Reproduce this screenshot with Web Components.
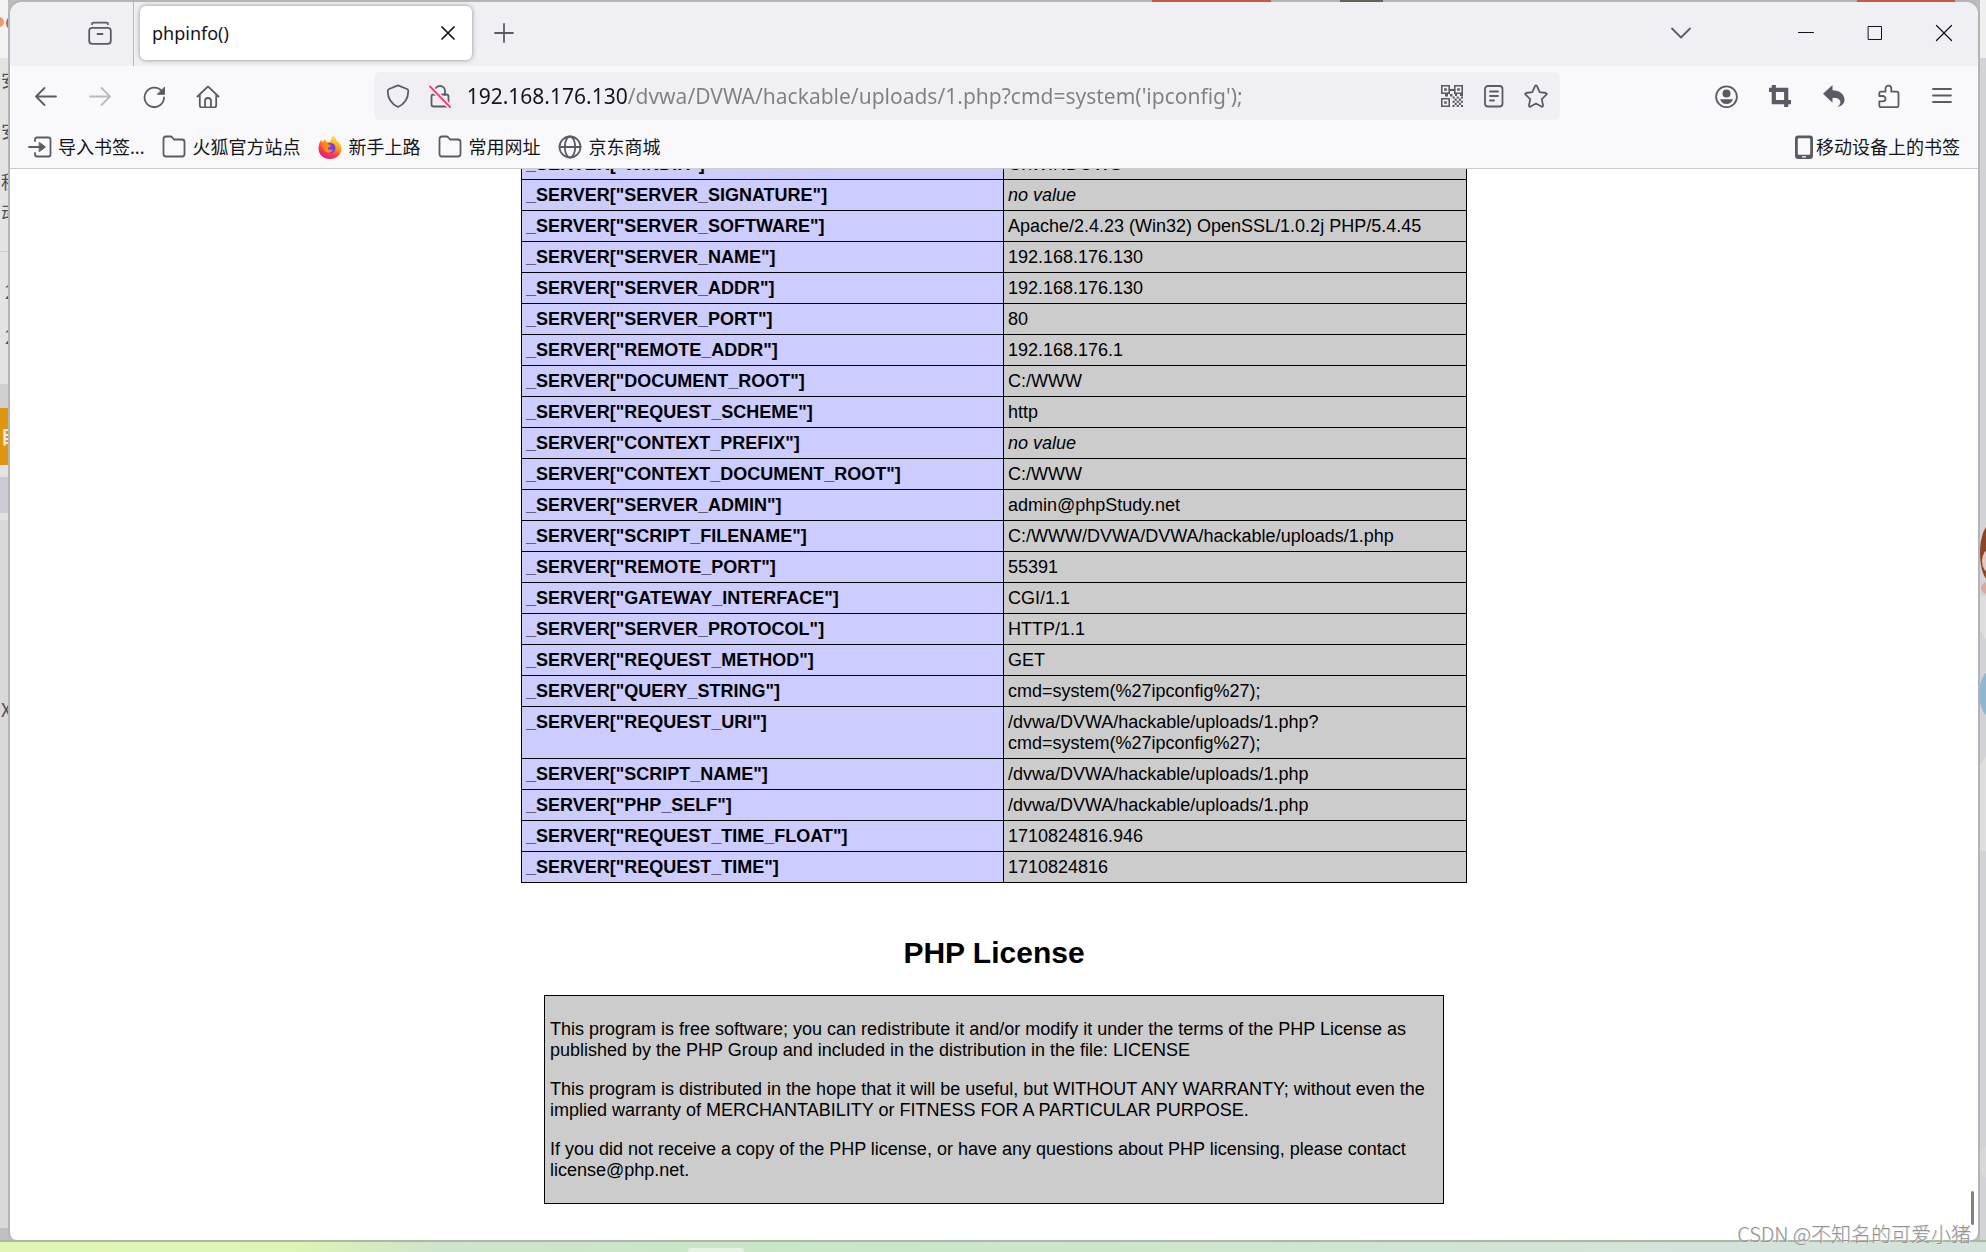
<!DOCTYPE html>
<html lang="zh-CN">
<head>
<meta charset="utf-8">
<title>phpinfo()</title>
<style>
html, body { margin: 0; height: 100%; overflow: hidden; }
body { font-family: "Noto Sans", "Noto Sans CJK SC", sans-serif; color: #15141a; }
</style>
</head>
<body>
<desk-top>
  <browser-window>
    <tab-strip slot="chrome"><browser-tab>phpinfo()</browser-tab></tab-strip>
    <nav-bar slot="chrome"></nav-bar>
    <bookmark-bar slot="chrome">
      <book-mark icon="import">导入书签...</book-mark>
      <book-mark icon="folder">火狐官方站点</book-mark>
      <book-mark icon="firefox">新手上路</book-mark>
      <book-mark icon="folder">常用网址</book-mark>
      <book-mark icon="globe">京东商城</book-mark>
      <book-mark slot="end" icon="phone" tight>移动设备上的书签</book-mark>
    </bookmark-bar>
    <server-table></server-table>
    <license-section>
      <p>This program is free software; you can redistribute it and/or modify it under the terms of the PHP License as published by the PHP Group and included in the distribution in the file: LICENSE</p>
      <p>This program is distributed in the hope that it will be useful, but WITHOUT ANY WARRANTY; without even the implied warranty of MERCHANTABILITY or FITNESS FOR A PARTICULAR PURPOSE.</p>
      <p>If you did not receive a copy of the PHP license, or have any questions about PHP licensing, please contact license@php.net.</p>
    </license-section>
  </browser-window>
  <water-mark slot="overlay">CSDN @不知名的可爱小猪</water-mark>
</desk-top>
<script>
const define = (name, html, setup) => {
  const template = document.createElement('template');
  template.innerHTML = html;
  customElements.define(name, class extends HTMLElement {
    constructor() {
      super();
      this.attachShadow({ mode: 'open' }).append(template.content.cloneNode(true));
    }
    connectedCallback() { if (setup) setup(this, this.shadowRoot); }
  });
};

const qr = () => {
  let d = '';
  for (let y = 0; y < 5; y++) for (let x = 0; x < 5; x++)
    if ((x + y) % 2 === 0) d += `M${12.5 + x * 2.1} ${12.5 + y * 2.1}h2.1v2.1h-2.1z`;
  return `<g stroke-width="1.6"><path d="M1.8 1.8h7.4v7.4H1.8zM14.8 1.8h7.4v7.4h-7.4zM1.8 14.8h7.4v7.4H1.8z"/></g>
    <path fill="currentColor" stroke="none" d="M4.2 4.2h2.6v2.6H4.2zM17.2 4.2h2.6v2.6h-2.6zM4.2 17.2h2.6v2.6H4.2zM10 5h4v2h-4zM5 10h3v2.500H5zM10 10h2.500v2.500H10zM20 10h3v2h-3zM15 10h2v2h-2z${d}"/>`;
};

const ICONS = {
  library: '<path d="M4 3.200Q4 1.700 5.500 1.700h13Q20 1.700 20 3.200"/><rect x="1.200" y="6.800" width="21.600" height="16" rx="3"/><path d="M9.500 13h5"/>',
  close: '<path d="M6 6l12 12M18 6L6 18" stroke="#15141a" stroke-width="1.700"/>',
  plus: '<path d="M12 3v18M3 12h18"/>',
  chevron: '<path d="M3 7.500l9 9 9-9"/>',
  min: '<path d="M4.500 11.500h15" stroke="#15141a" stroke-width="1"/>',
  max: '<rect x="5.500" y="5.500" width="13" height="13" stroke="#15141a" stroke-width="1"/>',
  quit: '<path d="M4.500 4.500l15 15M19.500 4.500l-15 15" stroke="#15141a" stroke-width="1.300"/>',
  back: '<path d="M22 12.500H2.500M10.500 4L2 12.500l8.500 8.500"/>',
  reload: '<path d="M20 7.500A9.700 9.700 0 1 0 22 13.500"/><path fill="currentColor" stroke-width="1" d="M22.500 3.500v6.800h-6.800z"/>',
  home: '<path d="M1.500 12.500L11 3.300q1-1 2 0l9.500 9.200M3.800 11v10.500q0 2 2 2h12.400q2 0 2-2V11M9 23.200V17q0-3 3-3t3 3v6.200"/>',
  shield: '<path d="M12 1.300L21 5q1.300.6 1.300 2C22.200 14 18.500 20 12 23 5.500 20 1.800 14 1.700 7Q1.700 5.600 3 5z"/>',
  lock: '<path d="M7 11V7a5 5 0 0 1 10 0v4M5.500 10.500q-2 0-2 2v8q0 2 2 2h13q2 0 2-2v-8q0-2-2-2h-4.500M5.500 10.500h5"/><path stroke="#f0f0f4" stroke-width="5" d="M2 2.500l20 20.500"/><path stroke="#ff3b6b" d="M2 2.500l20 20.500"/>',
  qr: qr(),
  reader: '<rect x="3" y="2" width="17.500" height="20.500" rx="3"/><path d="M8 7.500h8M8 12h8M8 16.500h4"/>',
  star: '<path d="M12 1.500q.7 0 1 .7l2.700 5.900 6.200.9q1.500.4.500 1.700l-4.600 4.500 1.200 6.300q0 1.700-1.600 1.100L12 19.400l-5.400 3.200q-1.600.6-1.600-1.100l1.200-6.300-4.600-4.500q-1-1.300.5-1.700l6.200-.9L11 2.200q.3-.7 1-.7z"/>',
  account: '<circle cx="12.500" cy="12.800" r="10.400"/><g fill="currentColor" stroke="none"><circle cx="12.500" cy="9.600" r="4"/><path d="M6.100 15.300h12.800q-1.400 4.700-6.400 4.700t-6.400-4.700z"/></g>',
  crop: '<path stroke-width="4.200" d="M1 5.800h17.200V23M5.800 1v17.200H23"/>',
  undo: '<path fill="currentColor" stroke="none" d="M1 9.800L10.500 1v5.300c7 0 12 4 12 9.500 0 4-3 6.500-7 7.200 2.800-2.300 3.500-4.300 2.500-6.500-1-2-3.500-2.700-7.500-2.700v5z"/>',
  puzzle: '<path d="M5 23.200q-1.700 0-1.700-1.700V17.400h3.500a2.700 2.700 0 0 0 0-5.400H3.300V9.400q0-1.700 1.700-1.700h4.500V4.600a2.900 2.900 0 0 1 5.800 0v3.100h5.500q1.700 0 1.700 1.700v12q0 1.800-1.700 1.800z"/>',
  menu: '<path d="M3 5h18M3 11.500h18M3 18h18"/>',
  import: '<path d="M7 6V4.500Q7 2.500 9 2.500h11.500q2 0 2 2v15q0 2-2 2H9q-2 0-2-2V18M1 12h12"/><path fill="currentColor" stroke-width="1" d="M11.500 7.500l6 4.500-6 4.500z"/>',
  folder: '<path d="M1.500 19V4q0-2.500 2.500-2.500h4.500q1 0 1.700.8L12 4.500h8q2.500 0 2.500 2.500v12q0 2.500-2.500 2.500H4Q1.500 21.500 1.500 19z"/>',
  globe: '<circle cx="12" cy="12" r="10.500"/><ellipse cx="12" cy="12" rx="5.200" ry="10.500"/><path d="M1.500 12h21"/>',
  phone: '<path fill="currentColor" stroke="none" fill-rule="evenodd" d="M6 .5h12q3 0 3 3v17.500q0 3-3 3H6q-3 0-3-3V3.500q0-3 3-3zM7 3.300q-1.200 0-1.200 1.200v14q0 1.200 1.200 1.200h10q1.200 0 1.200-1.200v-14q0-1.200-1.200-1.200zM10 21.200v1.200h4v-1.200z"/>',
  firefox: `<defs><linearGradient id="f" x1=".8" y1="0" x2=".3" y2="1"><stop offset="0" stop-color="#fff44f"/><stop offset=".4" stop-color="#ffa21f"/><stop offset=".7" stop-color="#ff3f3f"/><stop offset="1" stop-color="#e31587"/></linearGradient></defs>
    <g stroke="none"><path fill="url(#f)" d="M15.500.5c2 2 2.500 3.500 3.200 5.200 3 2 4.800 4.600 4.800 7.800 0 6-5 10.500-11.500 10.500S.5 19.500.5 13.500C.5 10 1.500 6.500 3.500 4.500c0 1.200.2 1.800.8 2.500C5.500 6 6 5 7 4c.4 1.500 1 2.500 2.500 3.200C11.500 7 13 6.500 13 5c0-2 1-3.300 2.500-4.500z"/>
    <circle cx="12.300" cy="13" r="5.200" fill="#7542e5"/><path fill="#ff8a16" d="M4.500 10.500c2-2 5-2 6.500-1 1.500.2 2 1 1.500 1.800-1 1.200-2.500.7-2.700 2 .5 1.800 3 2.200 4.700.9 0 3-3 4-5 3.200-3-1-5-3.500-5-6.900z"/></g>`
};

/* A 24-unit line icon, chosen by name */
define('ui-icon', `<style>
  :host { display: block; width: 24px; height: 24px; flex: none; }
  svg { display: block; width: 100%; height: 100%; fill: none; stroke: currentColor; stroke-width: 1.800; stroke-linecap: round; stroke-linejoin: round; }
  :host([name=crop]) svg, :host([name=qr]) svg { stroke-linecap: butt; stroke-linejoin: miter; }
  :host([flip]) svg { transform: scaleX(-1); }
</style><svg viewBox="0 0 24 24" aria-hidden="true"></svg>`,
(el, root) => { root.querySelector('svg').innerHTML = ICONS[el.getAttribute('name')] || ''; });

const setIcon = (icon, name) => {
  icon.setAttribute('name', name);
  icon.shadowRoot.querySelector('svg').innerHTML = ICONS[name];
};

define('icon-button', `<style>
  :host { display: flex; flex: none; width: 48px; height: 48px; }
  button { all: unset; flex: 1; display: flex; align-items: center; justify-content: center; color: #5b5b66; }
  button:disabled { opacity: .4; }
</style><button type="button"><ui-icon></ui-icon></button>`,
(el, root) => {
  const icon = root.querySelector('ui-icon');
  const button = root.querySelector('button');
  const name = el.getAttribute('icon');
  setIcon(icon, name);
  if (el.hasAttribute('flip')) icon.setAttribute('flip', '');
  button.disabled = el.hasAttribute('disabled');
  button.setAttribute('aria-label', el.getAttribute('label') || name);
});

define('browser-tab', `<style>
  :host { display: flex; align-items: center; width: 332px; height: 54px; box-sizing: border-box; padding: 0 0 0 12px;
    background: #fff; border-radius: 6px; box-shadow: 0 0 5px rgba(0,0,0,.4); font-size: 18px; }
  span { flex: 1; }
</style><span><slot></slot></span><icon-button icon="close" label="关闭标签页"></icon-button>`);

define('tab-strip', `<style>
  :host { display: flex; height: 64px; box-sizing: border-box; padding-bottom: 2px; align-items: center; background: #f0f0f4; }
  .lib { height: 64px; display: flex; align-items: center; justify-content: flex-end; width: 123px; border-right: 1px solid #b9b9bf; margin: 0 6px -2px 0; padding-bottom: 2px; box-sizing: border-box; width: 124px; }
  .lib icon-button { width: 66px; }
  .add { margin-left: 8px; }
  .space { flex: 1; }
  .list { margin-right: 66px; }
  .sys { width: 69px; }
</style>
<div class="lib"><icon-button icon="library"></icon-button></div>
<slot></slot>
<icon-button class="add" icon="plus" label="新标签页"></icon-button>
<div class="space"></div>
<icon-button class="list" icon="chevron"></icon-button>
<icon-button class="sys" icon="min"></icon-button>
<icon-button class="sys" icon="max"></icon-button>
<icon-button class="sys" icon="quit"></icon-button>`);

define('address-box', `<style>
  :host { display: flex; align-items: center; height: 48px; background: #f0f0f4; border-radius: 6px; padding: 0 3px; box-sizing: border-box; min-width: 0; }
  icon-button { width: 42px; }
  input { all: unset; flex: 1; min-width: 0; height: 48px; margin-left: 6px; font-size: 21px; color: #15141a;
    background: linear-gradient(90deg, #15141a 161px, #808084 161px);
    -webkit-background-clip: text; background-clip: text; -webkit-text-fill-color: transparent; }
</style>
<icon-button icon="shield"></icon-button><icon-button icon="lock"></icon-button>
<input type="text" aria-label="地址" value="192.168.176.130/dvwa/DVWA/hackable/uploads/1.php?cmd=system('ipconfig');">
<icon-button icon="qr"></icon-button><icon-button icon="reader"></icon-button><icon-button icon="star"></icon-button>`);

define('nav-bar', `<style>
  :host { display: flex; align-items: center; height: 60px; padding: 0 12px; background: #f9f9fb; }
  nav { display: flex; gap: 6px; }
  .spring { flex: 3; }
  address-box { flex: 25; }
</style>
<nav><icon-button icon="back"></icon-button><icon-button icon="back" flip disabled label="前进"></icon-button><icon-button icon="reload"></icon-button><icon-button icon="home"></icon-button></nav>
<div class="spring"></div><address-box></address-box><div class="spring"></div>
<nav><icon-button icon="account"></icon-button><icon-button icon="crop"></icon-button><icon-button icon="undo"></icon-button><icon-button icon="puzzle"></icon-button><icon-button icon="menu"></icon-button></nav>`);

define('bookmark-bar', `<style>
  :host { display: flex; justify-content: space-between; align-items: center; height: 42px; padding: 0 18px; background: #f9f9fb; border-bottom: 1px solid #ccccce; }
  div { display: flex; gap: 18px; }
</style><div><slot></slot></div><div><slot name="end"></slot></div>`);

define('book-mark', `<style>
  :host { display: block; font-size: 18px; line-height: 24px; }
  a { display: flex; align-items: center; gap: 6px; color: inherit; text-decoration: none; white-space: nowrap; }
  :host([tight]) a { gap: 0; }
  ui-icon { color: #5b5b66; }
</style><a href="#"><ui-icon></ui-icon><span><slot></slot></span></a>`,
(el, root) => setIcon(root.querySelector('ui-icon'), el.getAttribute('icon')));

const ROWS = [
  ['WINDIR', 'C:\\WINDOWS'], ['SERVER_SIGNATURE', null],
  ['SERVER_SOFTWARE', 'Apache/2.4.23 (Win32) OpenSSL/1.0.2j PHP/5.4.45'],
  ['SERVER_NAME', '192.168.176.130'], ['SERVER_ADDR', '192.168.176.130'], ['SERVER_PORT', '80'],
  ['REMOTE_ADDR', '192.168.176.1'], ['DOCUMENT_ROOT', 'C:/WWW'], ['REQUEST_SCHEME', 'http'],
  ['CONTEXT_PREFIX', null], ['CONTEXT_DOCUMENT_ROOT', 'C:/WWW'], ['SERVER_ADMIN', 'admin@phpStudy.net'],
  ['SCRIPT_FILENAME', 'C:/WWW/DVWA/DVWA/hackable/uploads/1.php'], ['REMOTE_PORT', '55391'],
  ['GATEWAY_INTERFACE', 'CGI/1.1'], ['SERVER_PROTOCOL', 'HTTP/1.1'], ['REQUEST_METHOD', 'GET'],
  ['QUERY_STRING', 'cmd=system(%27ipconfig%27);'],
  ['REQUEST_URI', '/dvwa/DVWA/hackable/uploads/1.php?<wbr>cmd=system(%27ipconfig%27);'],
  ['SCRIPT_NAME', '/dvwa/DVWA/hackable/uploads/1.php'], ['PHP_SELF', '/dvwa/DVWA/hackable/uploads/1.php'],
  ['REQUEST_TIME_FLOAT', '1710824816.946'], ['REQUEST_TIME', '1710824816']
];

define('server-table', `<style>
  :host { display: block; flex: none; width: 946px; max-width: 100%; font: 18px/21px "Liberation Sans", Arial, sans-serif; color: #000; }
  table { width: 100%; border-collapse: collapse; table-layout: fixed; }
  th, td { border: 1px solid #000; padding: 5px 4px 4px; text-align: left; vertical-align: top; }
  th { width: 51%; box-sizing: border-box; background: #ccccff; }
  td { background: #cccccc; }
</style><table><tbody></tbody></table>`,
(el, root) => {
  root.querySelector('tbody').innerHTML = ROWS.map(([k, v]) =>
    `<tr><th scope="row">_SERVER["${k}"]</th><td>${v === null ? '<i>no value</i>' : v}</td></tr>`).join('');
});

define('license-section', `<style>
  :host { display: block; flex: none; width: 900px; max-width: 100%; font: 18px/21px "Liberation Sans", Arial, sans-serif; color: #000; }
  h2 { margin: 0 0 24px; font-size: 30px; line-height: 36px; text-align: center; }
  div { display: flow-root; border: 1px solid #000; background: #ccc; padding: 5px 4px 4px 5px; }
  ::slotted(p) { margin: 18px 0; }
</style><h2>PHP License</h2><div><slot></slot></div>`);

define('browser-window', `<style>
  :host { display: flex; flex-direction: column; box-sizing: border-box; background: #fff; overflow: hidden; border-radius: 14px 14px 8px 8px;
    border: 2px solid #b4b4b6; border-bottom: 0; }
  .chrome { display: flex; flex-direction: column; flex: none; }
  .body { flex: 1; min-height: 0; display: flex; }
  main { flex: 1; min-width: 0; display: flex; flex-direction: column; align-items: center; justify-content: flex-end; gap: 52px; overflow: hidden; padding-bottom: 36px; }
  .scroll { position: absolute; right: 12px; bottom: 27px; width: 3px; height: 34px; border-radius: 2px; background: #808080; }
</style>
<div class="chrome"><slot name="chrome"></slot></div>
<div class="body"><main><slot></slot></main></div><div class="scroll"></div>`);

define('water-mark', `<style>
  :host { position: absolute; right: 15px; bottom: 6px; font: 300 20px/24px "Noto Sans CJK SC", sans-serif; color: #929292; text-shadow: 1px 1px 0 #e4e4e4; white-space: nowrap; }
</style><slot></slot>`);

/* The page that shows behind the window's two sides */
define('back-drop', `<style>
  :host { display: block; overflow: hidden; }
  svg { display: block; width: 100%; height: 100%; }
  text { font: 18px "Noto Sans CJK SC", sans-serif; fill: #505060; }
</style><svg></svg>`,
(el, root) => {
  root.querySelector('svg').innerHTML = el.getAttribute('side') === 'left'
    ? `<rect width="12" height="1240" fill="#e3e3e3"/><rect width="12" height="58" fill="#f3f3f3"/>
       <rect y="520" width="12" height="720" fill="#d9d9d9"/><rect y="1228" width="12" height="12" fill="#bfc0c4"/>
       <circle cx="-1" cy="22" r="5" fill="#ee9b67"/><circle cx="14" cy="23" r="8" fill="#e0563c"/>
       <rect y="251" width="12" height="1" fill="#c8c8c8"/><rect y="384" width="12" height="24" fill="#d0d0d2"/>
       <rect y="408" width="12" height="57" fill="#de960f"/><rect y="477" width="12" height="36" fill="#cbcbd4"/>
       <text x="1" y="87">安</text><text x="1" y="138">安</text><text x="1" y="189">程</text><text x="1" y="220">动</text>
       <text x="5" y="299">2</text><text x="5" y="344">2</text><text x="1" y="444" style="fill:#f4efe4;font-weight:bold">目</text><text x="1" y="717">X</text>`
    : `<rect width="10" height="1240" fill="#d2d3d6"/><rect width="10" height="58" fill="#efefef"/>
       <ellipse cx="10" cy="553" rx="10" ry="28" fill="#8b4524"/><ellipse cx="10" cy="561" rx="8" ry="12" fill="#e2c5be"/><ellipse cx="8" cy="588" rx="7" ry="6" fill="#dda99d"/>
       <path d="M0 596h10v50L0 630z" fill="#dedede"/><ellipse cx="14" cy="694" rx="15" ry="25" fill="#8fb8d0"/>
       <path d="M0 765l10-14v100H0z" fill="#dedede"/><circle cx="18" cy="1162" r="20" fill="#d8d8d8"/>`;
});

define('desk-top', `<style>
  :host { display: flex; flex-direction: column; height: 100vh; position: relative; overflow: hidden; background: #bdbdbd; }
  .row { flex: 1; min-height: 0; display: flex; }
  back-drop { width: 8px; }
  back-drop[side=right] { width: 6px; }
  ::slotted(browser-window) { flex: 1; min-width: 0; }
  .edge { position: absolute; top: 0; left: 58%; right: 31px; height: 2px; display: flex; }
  .edge i { background: #bf5a45; flex: 119; }
  .edge i + i { background: #66615a; flex: 43; }
  .edge i:last-of-type { background: #bf5a45; flex: 98; }
  .edge b { flex: 69; }
  .edge b + i + b { flex: 475; }
  .bar { flex: none; height: 10px; border-top: 2px solid #aab9a4; background: linear-gradient(90deg, #dff6b4 0, #dcf4b5 15%, #cfe4cc 22%, #c9e7c7 36%, #cde6cc 60%, #d4e3da 85%); display: flex; align-items: flex-end; padding-left: 688px; }
  .bar i { width: 56px; height: 4px; border-radius: 3px 3px 0 0; background: #e6f3e4; }
</style>
<div class="row"><back-drop side="left"></back-drop><slot></slot><back-drop side="right"></back-drop></div>
<div class="bar"><i></i></div>
<div class="edge"><i></i><b></b><i style="background:#66615a;flex:43"></i><b></b><i></i></div>
<slot name="overlay"></slot>`);
</script>
</body>
</html>
